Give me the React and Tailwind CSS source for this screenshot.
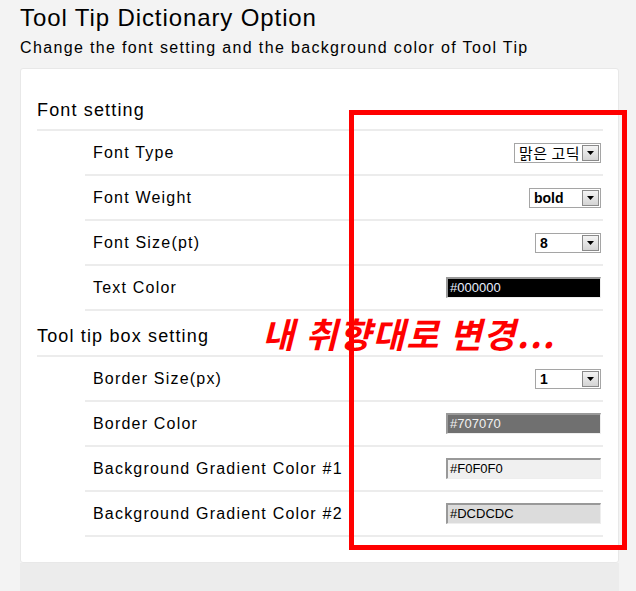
import React from "react"

const FONT = { fontFamily: '"Liberation Sans", "Noto Sans CJK KR", sans-serif' }
const KR = { fontFamily: '"Noto Sans CJK KR", "Liberation Sans", sans-serif' }

function Select({ value, width, bold }) {
  return (
    <div className={`${width} h-[20px] flex items-stretch border border-[#a5a5a5] bg-white`}>
      <div
        className={`flex-1 min-w-0 flex items-center pl-[4px] leading-none text-black whitespace-nowrap overflow-hidden ${bold ? "font-bold text-[14px]" : "text-[15px] tracking-[0.5px] pl-[3px]"}`}
        style={bold ? FONT : KR}
      >
        {value}
      </div>
      <div className="w-[17px] shrink-0 m-[1px] border border-[#8a8a8a] bg-gradient-to-b from-[#f4f4f4] to-[#d4d4d4] flex items-center justify-center">
        <svg width="7" height="4" viewBox="0 0 7 4">
          <path d="M0 0h7L3.5 4z" fill="#000" />
        </svg>
      </div>
    </div>
  )
}

function ColorInput({ value, bg, text }) {
  return (
    <div
      className={`w-[155px] h-[21px] flex items-center pl-[2px] border-t-2 border-l-2 border-[#999] border-b border-r border-b-[#eee] border-r-[#eee] text-[13px] ${bg} ${text}`}
      style={FONT}
    >
      {value}
    </div>
  )
}

function Row({ label, children }) {
  return (
    <div className="ml-12 h-[45px] border-b-2 border-[#ececec] flex items-center justify-between pl-2 pr-[2px]">
      <span className="text-[16px] text-black tracking-[1.2px]">{label}</span>
      {children}
    </div>
  )
}

function Header({ title }) {
  return (
    <div className="h-[46px] border-b-2 border-[#ececec] flex items-center">
      <span className="pt-[6px] text-[18px] text-black tracking-[1.15px]">{title}</span>
    </div>
  )
}

export default function App() {
  return (
    <div className="relative min-h-[591px] bg-[#f3f3f3] pl-5 pr-[17px] flex flex-col" style={FONT}>
      <h1 className="pt-[4px] text-[24px] leading-[28px] text-black tracking-[0.9px]">Tool Tip Dictionary Option</h1>
      <p className="mt-[6px] text-[16px] leading-[20px] text-black tracking-[1.35px]">
        Change the font setting and the background color of Tool Tip
      </p>

      <div className="mt-[10px] bg-white rounded-[3px] border border-[#e8e8e8] pt-4 pb-[25px] pl-[16px] pr-[15px]">
        <Header title="Font setting" />
        <Row label="Font Type">
          <Select value="맑은 고딕" width="w-[87px]" />
        </Row>
        <Row label="Font Weight">
          <Select value="bold" width="w-[72px]" bold />
        </Row>
        <Row label="Font Size(pt)">
          <Select value="8" width="w-[66px]" bold />
        </Row>
        <Row label="Text Color">
          <ColorInput value="#000000" bg="bg-black" text="text-[#e8f0ff]" />
        </Row>

        <Header title="Tool tip box setting" />
        <Row label="Border Size(px)">
          <Select value="1" width="w-[66px]" bold />
        </Row>
        <Row label="Border Color">
          <ColorInput value="#707070" bg="bg-[#707070]" text="text-[#f0f0f0]" />
        </Row>
        <Row label="Background Gradient Color #1">
          <ColorInput value="#F0F0F0" bg="bg-[#f0f0f0]" text="text-black" />
        </Row>
        <Row label="Background Gradient Color #2">
          <ColorInput value="#DCDCDC" bg="bg-[#dcdcdc]" text="text-black" />
        </Row>
      </div>
      <div className="flex-1 bg-[#ececec]" />

      {/* annotation overlay */}
      <div className="absolute left-[349px] top-[110px] w-[278px] h-[440px] border-[5px] border-[#ff0000] pointer-events-none" />
      <div
        className="absolute left-[262px] top-[309px] text-[35px] leading-[48px] font-bold italic text-[#ff0000] tracking-[1.5px] whitespace-nowrap"
        style={KR}
      >
        내 취향대로 변경...
      </div>
    </div>
  )
}
